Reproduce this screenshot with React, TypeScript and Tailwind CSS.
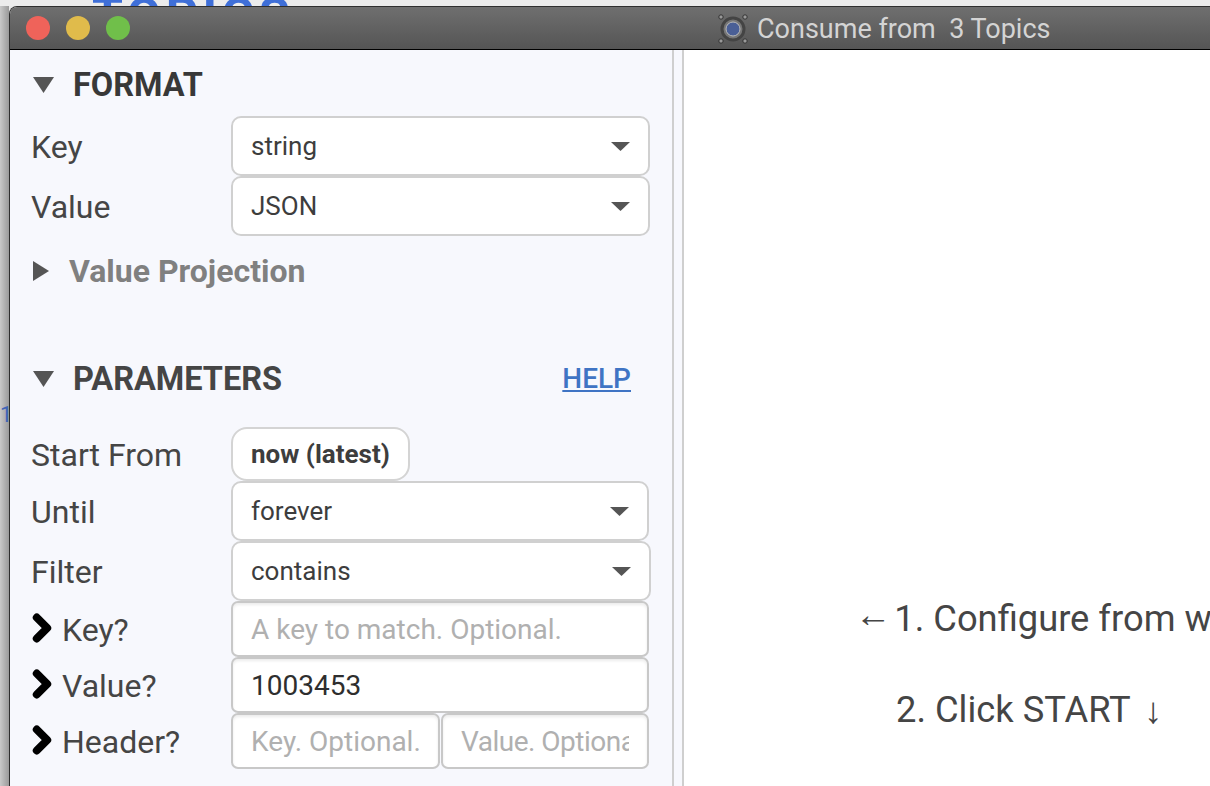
import { ChevronRight } from 'lucide-react';

const font = { fontFamily: 'Roboto, sans-serif' };

function Caret() {
  return (
    <svg width="21" height="16" viewBox="0 0 21 16" className="shrink-0 fill-current">
      <path d="M0 0h21L10.500 16z" />
    </svg>
  );
}

function SelectBox({ value, className }: { value: string; className: string }) {
  return (
    <div className={`flex items-center justify-between rounded-[10px] border-2 border-[#d0d0d0] bg-white pr-[18px] pl-[18px] text-[26px] text-[#3d3d3d] ${className}`}>
      <span>{value}</span>
      <svg width="19" height="9" viewBox="0 0 19 9" className="fill-[#555]">
        <path d="M0 0h19L9.500 9z" />
      </svg>
    </div>
  );
}

function TextBox({ value, placeholder, className }: { value?: string; placeholder?: string; className: string }) {
  return (
    <div className={`flex items-center rounded-[7px] border-2 border-[#c8c8c8] bg-white px-[18px] pt-[2px] text-[28px] whitespace-nowrap shadow-[inset_0_2px_3px_rgba(0,0,0,0.08)] ${className}`}>
      <span className={`block min-w-0 overflow-hidden ${value ? 'text-[#2e2e2e]' : 'text-[#b0b0b0]'}`}>
        {value ?? placeholder}
      </span>
    </div>
  );
}

function Label({ text }: { text: string }) {
  return <div className="w-[221px] pt-[2px] pl-[21px] text-[32px] leading-none text-[#454545]">{text}</div>;
}

function MatchLabel({ text }: { text: string }) {
  return (
    <div className="flex w-[221px] items-center pl-[11px] text-[32px] leading-none text-[#454545]">
      <ChevronRight size={42} strokeWidth={4.5} className="-mt-[3px] -mr-[1px] text-black" />
      <span className="pt-[2px]">{text}</span>
    </div>
  );
}

export default function App() {
  return (
    <div className="flex h-[786px] w-[1210px] flex-col overflow-hidden bg-[#e9e9e9]" style={font}>
      <div className="h-[6px] shrink-0 overflow-hidden bg-[#ececec] pl-[92px]">
        <div className="-mt-[9px] text-[50px] leading-none font-bold tracking-[4.500px] whitespace-nowrap text-[#3f6fd8]">TOPICS</div>
      </div>

      <div className="flex min-h-0 flex-1">
        <div className="w-[9px] shrink-0 bg-gradient-to-r from-[#c9c9c9] to-[#9a9a9a]">
          <div className="mt-[398px] text-right text-[22px] leading-none text-[#3f64b8]">1</div>
        </div>

        <div className="flex min-w-0 flex-1 flex-col overflow-hidden rounded-tl-[8px] border-t border-l border-black/80">
          {/* title bar */}
          <div className="relative flex h-[43px] shrink-0 items-center border-b border-black bg-gradient-to-b from-[#6f6f6f] to-[#555555] pl-[16px]">
            <div className="flex gap-[16px]">
              <div className="h-[24px] w-[24px] rounded-full bg-[#ef635a]" />
              <div className="h-[24px] w-[24px] rounded-full bg-[#e0bb4b]" />
              <div className="h-[24px] w-[24px] rounded-full bg-[#70bf4a]" />
            </div>
            <div className="absolute top-[1px] left-[707px] flex h-full items-center gap-[8px] text-[27px] whitespace-pre text-[#d4d4d4]">
              <svg width="32" height="32" viewBox="0 0 32 32">
                <circle cx="16" cy="16" r="11" strokeWidth="3" fill="#777" stroke="#444" />
                <circle cx="16" cy="16" r="7" fill="#4a5f96" stroke="#bbb" strokeWidth="1" />
                {[[4, 4], [28, 4], [4, 28], [28, 28]].map(([x, y]) => (
                  <circle key={`${x}-${y}`} cx={x} cy={y} r="2.200" fill="#999" stroke="#333" strokeWidth="1" />
                ))}
              </svg>
              <span>Consume from  3 Topics</span>
            </div>
          </div>

          <div className="flex min-h-0 flex-1 bg-white">
            {/* sidebar */}
            <div className="flex w-[662px] shrink-0 flex-col bg-[#f7f8fd]">
              <div className="mt-[16px] flex h-[38px] items-center pl-[23px] text-[#555]">
                <Caret />
                <span className="ml-[19px] text-[32.500px] font-bold text-[#383838]">FORMAT</span>
              </div>

              <div className="mt-[12px] flex h-[60px] items-center">
                <Label text="Key" />
                <SelectBox value="string" className="h-[60px] w-[419px]" />
              </div>
              <div className="flex h-[60px] items-center">
                <Label text="Value" />
                <SelectBox value="JSON" className="h-[60px] w-[419px]" />
              </div>

              <div className="mt-[14px] flex h-[42px] items-center pl-[23px] text-[#555]">
                <svg width="16" height="20" viewBox="0 0 16 20" className="fill-current"><path d="M0 0l16 10L0 20z" /></svg>
                <span className="ml-[20px] text-[32px] font-bold text-[#808080]">Value Projection</span>
              </div>

              <div className="mt-[66px] flex h-[42px] items-center pr-[41px] pl-[23px] text-[#555]">
                <Caret />
                <span className="ml-[19px] flex-1 text-[32.500px] font-bold text-[#454545]">PARAMETERS</span>
                <span className="text-[28px] font-medium text-[#3f74c4] underline">HELP</span>
              </div>

              <div className="mt-[27px] flex h-[54px] items-center">
                <Label text="Start From" />
                <div className="flex h-[54px] items-center rounded-[16px] border-2 border-[#d4d4d4] bg-white px-[18px] text-[26px] font-bold text-[#3d3d3d]">now (latest)</div>
              </div>
              <div className="flex h-[60px] items-center">
                <Label text="Until" />
                <SelectBox value="forever" className="h-[60px] w-[418px]" />
              </div>
              <div className="flex h-[60px] items-center">
                <Label text="Filter" />
                <SelectBox value="contains" className="h-[60px] w-[420px]" />
              </div>
              <div className="flex h-[56px] items-center">
                <MatchLabel text="Key?" />
                <TextBox placeholder="A key to match. Optional." className="h-[56px] w-[418px]" />
              </div>
              <div className="flex h-[56px] items-center">
                <MatchLabel text="Value?" />
                <TextBox value="1003453" className="h-[56px] w-[418px]" />
              </div>
              <div className="flex h-[56px] items-center">
                <MatchLabel text="Header?" />
                <div className="flex gap-[1px]">
                  <TextBox placeholder="Key. Optional." className="h-[56px] w-[209px]" />
                  <TextBox placeholder="Value. Optional." className="h-[56px] w-[208px] tracking-[-0.500px]" />
                </div>
              </div>
            </div>

            {/* divider */}
            <div className="w-[2px] shrink-0 bg-[#cfcfcf]" />
            <div className="w-[8px] shrink-0 bg-[#f7f8fd]" />
            <div className="w-[2px] shrink-0 bg-[#cfcfcf]" />

            {/* main panel */}
            <div className="min-w-0 flex-1 overflow-hidden pt-[551px] pl-[175px] text-[36.300px] leading-none whitespace-nowrap text-[#454545]">
              <div>
                <span className="relative -top-[4px] -ml-[4px]">←</span>
                <span className="ml-[3px]">1. Configure from w</span>
              </div>
              <div className="mt-[55px] pl-[37px]">
                2. Click START <span className="relative top-[1px] ml-[5px]">↓</span>
              </div>
            </div>
          </div>
        </div>
      </div>
    </div>
  );
}
